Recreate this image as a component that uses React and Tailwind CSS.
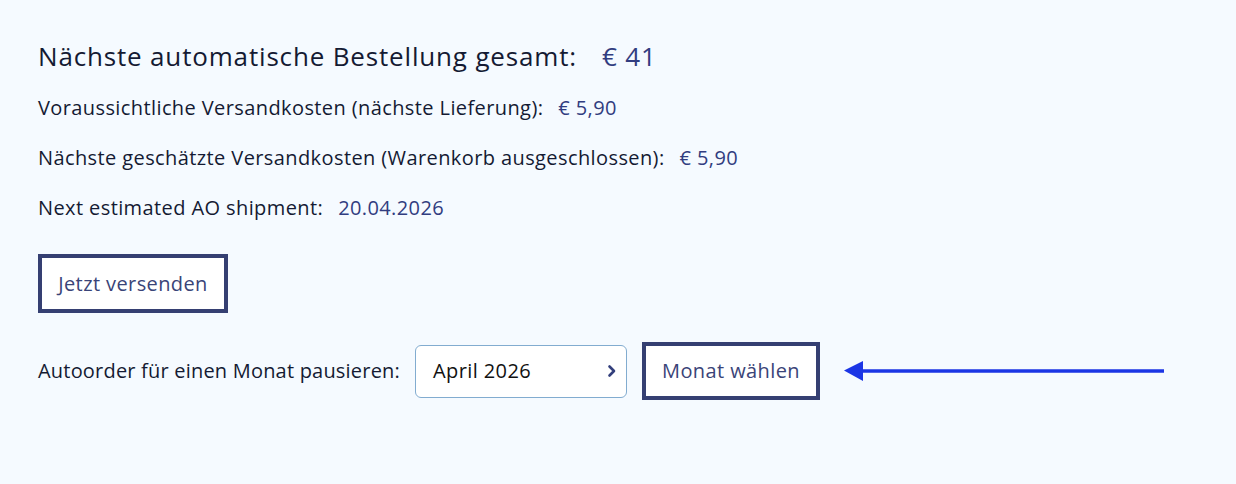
import React from "react";

const navy = "text-[#313d80]";

export default function App() {
  return (
    <div className="min-h-[484px] w-full bg-[#f5faff] px-[38px] pt-[40px] text-[#141a33] font-['Open_Sans','Noto_Sans',sans-serif]">
      <div className="flex items-baseline gap-[25px] text-[26px] leading-[32px] tracking-[0.032em]">
        <span>Nächste automatische Bestellung gesamt:</span>
        <span className={navy}>€ 41</span>
      </div>

      <div className="mt-[24px] flex flex-col gap-[26px] text-[20px] leading-[24px] tracking-[0.02em]">
        <div className="flex gap-[15px]">
          <span>Voraussichtliche Versandkosten (nächste Lieferung):</span>
          <span className={navy}>€ 5,90</span>
        </div>
        <div className="flex gap-[15px]">
          <span>Nächste geschätzte Versandkosten (Warenkorb ausgeschlossen):</span>
          <span className={navy}>€ 5,90</span>
        </div>
        <div className="flex gap-[15px]">
          <span>Next estimated AO shipment:</span>
          <span className={navy}>20.04.2026</span>
        </div>
      </div>

      <button className="mt-[34px] h-[59px] w-[190px] border-4 border-[#353f72] bg-white text-[20px] tracking-[0.02em] text-[#3a4478]">
        Jetzt versenden
      </button>

      <div className="mt-[29px] flex items-center text-[20px] tracking-[0.02em]">
        <span className="tracking-[0.01em]">Autoorder für einen Monat pausieren:</span>
        <div className="ml-[15px] flex h-[53px] w-[212px] items-center justify-between rounded-[6px] border border-[#82acd0] bg-white pl-[17px] pr-[9px] text-[#111]">
          <span>April 2026</span>
          <svg width="10" height="14" viewBox="0 0 10 14" fill="none">
            <path d="M2.5 2.5 L7 7 L2.5 11.5" stroke="#333f7c" strokeWidth="2.6" strokeLinecap="round" strokeLinejoin="round" />
          </svg>
        </div>
        <button className="ml-[15px] h-[58px] w-[178px] border-4 border-[#353f72] bg-white text-[#3a4478]">
          Monat wählen
        </button>
        <svg className="ml-[24px]" width="322" height="22" viewBox="0 0 322 22">
          <line x1="16" y1="11" x2="320" y2="11" stroke="#1b35e5" strokeWidth="3.5" />
          <polygon points="0,10.5 19,1 19,21" fill="#1b35e5" />
        </svg>
      </div>
    </div>
  );
}
